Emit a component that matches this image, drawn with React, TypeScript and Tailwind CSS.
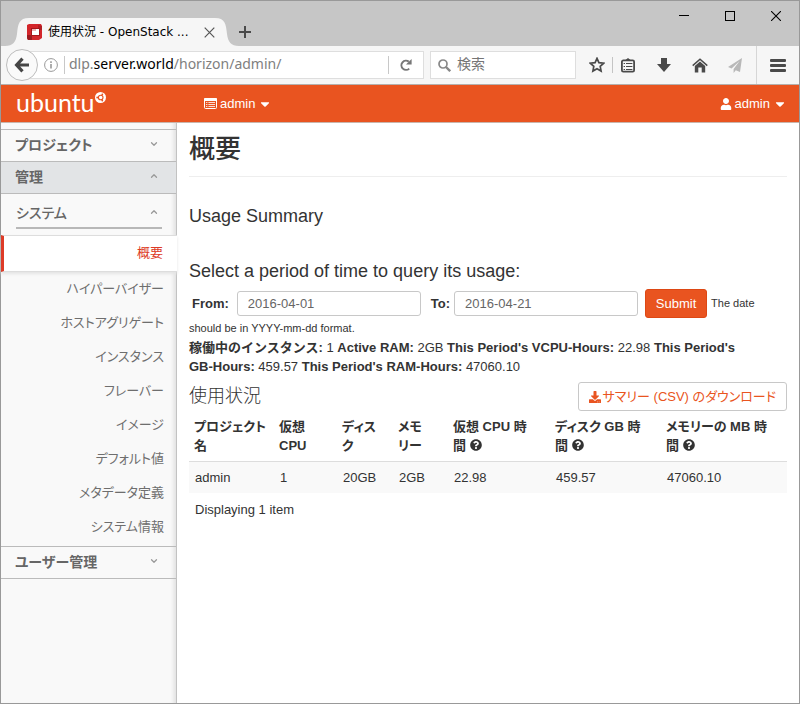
import type { ReactNode } from 'react';
import { ChevronDown, ChevronUp } from 'lucide-react';
import { FaCaretDown, FaDownload, FaQuestionCircle, FaUser } from 'react-icons/fa';

const systemItems = [
  'ハイパーバイザー',
  'ホストアグリゲート',
  'インスタンス',
  'フレーバー',
  'イメージ',
  'デフォルト値',
  'メタデータ定義',
  'システム情報',
];

function TabStrip() {
  return (
    <header className="flex h-[45px] items-end bg-[#c6c6c6] pl-1">
      <div className="flex h-7 items-stretch">
        <svg width="24" height="28" viewBox="0 0 24 28" aria-hidden="true">
          <path d="M0 28 C8 28 11 24 12 16 C13 6 14 0 24 0 V28 Z" fill="#f6f6f6" />
        </svg>
        <div className="flex w-[186px] items-center bg-[#f6f6f6]">
          <svg width="15" height="16" viewBox="0 0 15 16" className="-ml-0.5 shrink-0" aria-hidden="true">
            <path d="M0 1 L2 0 H14 L15 2 V14 L12 16 H1 L0 14 Z" fill="#d3262b" />
            <path d="M0 11 H5 V16 H1 L0 14 Z" fill="#9c1a1f" />
            <path d="M11 1 L15 2 V6 H11 Z" fill="#b01f24" />
            <rect x="4" y="4" width="9" height="8" fill="#a5161b" />
            <rect x="5" y="5" width="7" height="6" fill="#fff" />
            <rect x="5" y="5" width="4" height="2" fill="#f1b3b4" />
          </svg>
          <span className="ml-[6px] whitespace-nowrap font-['DejaVu_Sans','Noto_Sans_CJK_JP',sans-serif] text-xs text-black">
            使用状況 - OpenStack ...
          </span>
          <button aria-label="タブを閉じる" className="ml-auto">
            <svg width="11" height="11" viewBox="0 0 11 11" stroke="#555" strokeWidth="1.2">
              <path d="M.7 .7 L10.3 10.3 M10.3 .7 L.7 10.3" />
            </svg>
          </button>
        </div>
        <svg width="24" height="28" viewBox="0 0 24 28" aria-hidden="true">
          <path d="M24 28 C16 28 13 24 12 16 C11 6 10 0 0 0 V28 Z" fill="#f6f6f6" />
        </svg>
      </div>
      <button aria-label="新しいタブ" className="mb-2">
        <svg width="12" height="12" viewBox="0 0 12 12" stroke="#4a4a4a" strokeWidth="2">
          <path d="M0 6 H12 M6 0 V12" />
        </svg>
      </button>
      <div className="ml-auto flex gap-9 self-start pt-[10px] pr-[18px]">
        <button aria-label="最小化">
          <svg width="10" height="10" viewBox="0 0 10 10">
            <rect y="4" width="10" height="1" />
          </svg>
        </button>
        <button aria-label="最大化">
          <svg width="10" height="10" viewBox="0 0 10 10" fill="none" stroke="#000">
            <rect x=".5" y=".5" width="9" height="9" />
          </svg>
        </button>
        <button aria-label="閉じる">
          <svg width="10" height="10" viewBox="0 0 10 10" stroke="#000" strokeWidth="1.1">
            <path d="M0 0 L10 10 M10 0 L0 10" />
          </svg>
        </button>
      </div>
    </header>
  );
}

function Toolbar() {
  return (
    <div className="flex h-[39px] items-center border-b border-[#b5b0ad] bg-[#f6f6f6] pl-[5px] font-['Noto_Sans','Noto_Sans_CJK_JP',sans-serif]">
      <button
        aria-label="戻る"
        className="z-10 flex size-8 shrink-0 items-center justify-center rounded-full border border-[#bdbdbd] bg-[#fafafa]"
      >
        <svg width="16" height="16" viewBox="0 0 16 16" fill="none" stroke="#464646" strokeWidth="3.2">
          <path d="M8.5 1.6 L2.6 8 L8.5 14.4 M3 8 H15" />
        </svg>
      </button>
      <div className="-ml-3 flex h-7 min-w-0 flex-1 items-center border border-[#dedede] bg-white pl-[17px]">
        <svg width="14" height="14" viewBox="0 0 14 14" fill="none" stroke="#999" className="shrink-0" aria-hidden="true">
          <circle cx="7" cy="7" r="6.4" />
          <path d="M7 6 V10.6 M7 3.2 V4.9" strokeWidth="1.6" />
        </svg>
        <div className="ml-[6px] h-[18px] w-px bg-[#c8c8c8]" />
        <div className="ml-1 min-w-0 flex-1 overflow-hidden pb-0.5 text-sm whitespace-nowrap text-[#808080]">
          dlp.<span className="text-black">server.world</span>/horizon/admin/
        </div>
        <div className="h-[18px] w-px bg-[#c8c8c8]" />
        <button aria-label="再読み込み" className="px-[11px]">
          <svg width="12" height="12" viewBox="0 0 12 12" fill="none">
            <path d="M9.2 9.6 A4.6 4.6 0 1 1 8.8 2.6" stroke="#777" strokeWidth="2" />
            <path d="M11.6 0 V5.6 H6 Z" fill="#777" />
          </svg>
        </button>
      </div>
      <div className="ml-[6px] flex h-7 w-[146px] items-center gap-[6px] border border-[#dedede] bg-white pl-[7px]">
        <svg width="13" height="13" viewBox="0 0 13 13" fill="none" stroke="#888" className="shrink-0" aria-hidden="true">
          <circle cx="5" cy="5" r="4" strokeWidth="1.7" />
          <path d="M8 8 L12.2 12.2" strokeWidth="2.4" />
        </svg>
        <input
          aria-label="検索"
          placeholder="検索"
          className="w-full min-w-0 pb-0.5 text-sm outline-none placeholder:text-[#757575]"
        />
      </div>
      <div className="flex h-full items-center text-[#4a4a4a]">
        <button aria-label="ブックマーク" className="ml-[13px]">
          <svg width="16" height="16" viewBox="0 0 16 16" fill="none" stroke="currentColor" strokeWidth="1.7">
            <path d="M8 1.4 L9.9 5.7 L14.7 6.2 L11.2 9.3 L12.1 14.1 L8 11.7 L3.9 14.1 L4.8 9.3 L1.3 6.2 L6.1 5.7 Z" />
          </svg>
        </button>
        <div className="ml-[7px] h-4 w-px bg-[#c4c4c4]" />
        <button aria-label="ブックマーク一覧" className="ml-2">
          <svg width="14" height="15" viewBox="0 0 14 15" fill="none" stroke="currentColor">
            <rect x=".9" y="2.4" width="12.2" height="11.2" rx="1.4" strokeWidth="1.8" />
            <path d="M4.5 2 L7 0 L9.5 2 V3 H4.5 Z" fill="currentColor" stroke="none" />
            <path d="M2.6 5.5 H4 M5 5.5 H11.4 M2.6 8.5 H4 M5 8.5 H11.4 M2.6 11.5 H4 M5 11.5 H11.4" strokeWidth="1" />
          </svg>
        </button>
        <button aria-label="ダウンロード" className="ml-[22px]">
          <svg width="14" height="14" viewBox="0 0 14 14" fill="currentColor">
            <path d="M4 0 H10 V6 H14 L7 14 L0 6 H4 Z" />
          </svg>
        </button>
        <button aria-label="ホーム" className="ml-[21px]">
          <svg width="16" height="15" viewBox="0 0 16 15">
            <path d="M.7 7.6 L8 1.2 L15.3 7.6" fill="none" stroke="currentColor" strokeWidth="1.5" />
            <path d="M2.8 8 L8 3.6 L13.2 8 V14.5 H9.7 V9.6 H6.3 V14.5 H2.8 Z" fill="currentColor" />
          </svg>
        </button>
        <button aria-label="共有" className="ml-5 text-[#b8b8b8]">
          <svg width="14" height="15" viewBox="0 0 14 15" fill="currentColor">
            <path d="M14 0 L0 9 L3.6 10.4 L11.6 3 L5.6 11 V15 L7.8 12.2 L12 14 Z" />
          </svg>
        </button>
        <div className="ml-[14px] h-full w-px bg-[#d6d6d6]" />
        <button aria-label="メニュー" className="mr-[13px] ml-[13px]">
          <svg width="16" height="13" viewBox="0 0 16 13" fill="currentColor">
            <rect width="16" height="3" rx="1" />
            <rect y="5" width="16" height="3" rx="1" />
            <rect y="10" width="16" height="3" rx="1" />
          </svg>
        </button>
      </div>
    </div>
  );
}

function Navbar() {
  return (
    <nav className="flex h-[38px] items-center border-b border-[#c9b5ac] bg-[#e95420] text-[13px] text-white">
      <a href="#home" className="flex w-[203px] items-center pb-1 pl-[15px]">
        <span className="font-['Lato',sans-serif] text-[25px] leading-8">ubuntu</span>
        <svg width="11" height="11" viewBox="0 0 11 11" className="mb-[9px]" aria-hidden="true">
          <circle cx="5.5" cy="5.5" r="5.5" fill="#fff" />
          <circle cx="5.7" cy="5.5" r="2.3" fill="none" stroke="#e95420" strokeWidth="1.1" />
          <circle cx="2.2" cy="5.5" r=".9" fill="#e95420" />
          <circle cx="7.3" cy="2.5" r=".9" fill="#e95420" />
          <circle cx="7.3" cy="8.5" r=".9" fill="#e95420" />
        </svg>
      </a>
      <button className="flex items-center gap-[3px]">
        <svg width="13" height="11" viewBox="0 0 13 11" aria-hidden="true">
          <rect x=".5" y=".5" width="12" height="10" rx="1" fill="none" stroke="#fff" />
          <rect x="0" y="0" width="13" height="3" rx="1" fill="#fff" />
          <path d="M2 4.5 H3.4 M4.4 4.5 H11 M2 6.5 H3.4 M4.4 6.5 H11 M2 8.5 H3.4 M4.4 8.5 H11" stroke="#fff" strokeOpacity=".8" />
        </svg>
        admin
        <FaCaretDown size={14} />
      </button>
      <button className="mr-3 ml-auto flex items-center gap-[3px]">
        <FaUser size={12} />
        admin
        <FaCaretDown size={14} />
      </button>
    </nav>
  );
}

function PanelHeading({ open, className, children }: { open?: boolean; className: string; children: ReactNode }) {
  const Icon = open ? ChevronUp : ChevronDown;
  return (
    <button className={`flex w-full items-center justify-between pb-0.5 text-left text-[#666] ${className}`}>
      {children}
      <Icon size={10} strokeWidth={3} className="mb-0.5 text-[#999]" />
    </button>
  );
}

function Sidebar() {
  return (
    <aside className="w-44 shrink-0 border-r border-[#c2c2c2] bg-[#f9f9f9] pt-[6px] text-sm leading-5 shadow-[inset_-5px_0_4px_-3px_#dedede]">
      <PanelHeading className="h-8 border-t border-[#bbb] pr-[17px] pl-[14px] font-bold">プロジェクト</PanelHeading>
      <PanelHeading open className="h-[33px] border-y border-[#bbb] bg-[#e2e4e6] pr-[17px] pl-[14px] font-bold">
        管理
      </PanelHeading>
      <div className="h-[41px] pt-[7px] pr-[14px] pl-[15px]">
        <PanelHeading open className="h-7 border-b-2 border-[#b8b8b8] pr-[3px] font-medium">
          システム
        </PanelHeading>
      </div>
      <a
        href="#overview"
        className="-mr-px flex h-[37px] items-center justify-end border-t border-b border-l-[3px] border-t-[#ddd] border-b-[#ddd] border-l-[#dd3b27] bg-white pr-[14px] pb-0.5 text-[13px] text-[#dd3b27] shadow-[0_2px_3px_#e4e4e4]"
      >
        概要
      </a>
      <ul className="pb-[2px]">
        {systemItems.map((item) => (
          <li key={item}>
            <a href={`#${item}`} className="flex h-[34px] items-center justify-end pr-3 text-[13px] text-[#6e6e6e]">
              {item}
            </a>
          </li>
        ))}
      </ul>
      <PanelHeading className="h-[33px] border-y border-[#bbb] pr-[17px] pl-[14px] font-bold">ユーザー管理</PanelHeading>
    </aside>
  );
}

function Help() {
  return <FaQuestionCircle size={12} className="inline align-[-1px]" aria-label="help" />;
}

function UsageTable() {
  return (
    <table className="w-full table-fixed text-left text-[13px] leading-[19px]">
      <colgroup>
        <col className="w-[85px]" />
        <col className="w-[63px]" />
        <col className="w-14" />
        <col className="w-[55px]" />
        <col className="w-[102px]" />
        <col className="w-[111px]" />
        <col className="w-[126px]" />
      </colgroup>
      <thead>
        <tr className="border-b border-[#ddd] align-top whitespace-nowrap [&>th]:pt-[6px] [&>th]:pb-[6px] [&>th]:pl-[5px]">
          <th>プロジェクト<br />名</th>
          <th>仮想<br />CPU</th>
          <th>ディス<br />ク</th>
          <th>メモ<br />リー</th>
          <th>仮想 CPU 時<br />間 <Help /></th>
          <th>ディスク GB 時<br />間 <Help /></th>
          <th>メモリーの MB 時<br />間 <Help /></th>
        </tr>
      </thead>
      <tbody>
        <tr className="bg-[#f9f9f9] [&>td]:py-[6px] [&>td]:pl-[6px]">
          <td>admin</td>
          <td>1</td>
          <td>20GB</td>
          <td>2GB</td>
          <td>22.98</td>
          <td>459.57</td>
          <td>47060.10</td>
        </tr>
      </tbody>
      <tfoot>
        <tr>
          <td colSpan={7} className="py-[7px] pl-[6px]">Displaying 1 item</td>
        </tr>
      </tfoot>
    </table>
  );
}

function Overview() {
  const field =
    'h-[25px] w-[184px] rounded-[3px] border border-[#c8c8c8] bg-white px-[10px] align-middle text-[13px] text-[#666] outline-none';
  return (
    <main className="min-w-0 flex-1 pr-3 pl-3 text-[#333]">
      <h1 className="border-b border-[#eee] pt-[9px] pb-[10px] text-[26px] leading-[34px] font-medium">概要</h1>
      <h2 className="mt-7 text-lg leading-[22px]">Usage Summary</h2>
      <form onSubmit={(e) => e.preventDefault()}>
        <h2 className="mt-[33px] text-lg leading-[22px]">Select a period of time to query its usage:</h2>
        <div className="pt-[7px] text-[13px] leading-[19px]">
          <label htmlFor="from" className="mr-2 ml-[3px] align-middle font-bold">From:</label>
          <input id="from" defaultValue="2016-04-01" className={field} />
          <label htmlFor="to" className="mr-1 ml-[10px] align-middle font-bold">To:</label>
          <input id="to" defaultValue="2016-04-21" className={field} />
          <button className="mr-1 ml-[7px] h-[29px] w-[62px] rounded-[3px] border border-[#dd4814] bg-[#e95420] align-middle text-white">
            Submit
          </button>
          <small className="align-middle text-[11px]">The date should be in YYYY-mm-dd format.</small>
        </div>
      </form>
      <p className="text-[13px] leading-[19px] [font-feature-settings:normal]">
        <b>稼働中のインスタンス:</b> 1 <b>Active RAM:</b> 2GB <b>This Period's VCPU-Hours:</b> 22.98{' '}
        <b>This Period's <span className="whitespace-nowrap">GB-Hours:</span></b> 459.57{' '}
        <b>This Period's RAM-Hours:</b> 47060.10
      </p>
      <div className="mt-[6px] flex items-start justify-between">
        <h3 className="text-lg leading-7 font-light">使用状況</h3>
        <button className="flex h-[29px] items-center gap-[2px] rounded-[3px] border border-[#c8c8c8] px-[10px] text-[13px] text-[#e95420]">
          <FaDownload size={12} />
          サマリー (CSV) のダウンロード
        </button>
      </div>
      <UsageTable />
    </main>
  );
}

export default function App() {
  return (
    <div className="flex min-h-screen flex-col border border-[#999] bg-white font-['Liberation_Sans','Noto_Sans_CJK_JP',sans-serif] [font-feature-settings:'palt']">
      <TabStrip />
      <Toolbar />
      <Navbar />
      <div className="flex flex-1">
        <Sidebar />
        <Overview />
      </div>
    </div>
  );
}
